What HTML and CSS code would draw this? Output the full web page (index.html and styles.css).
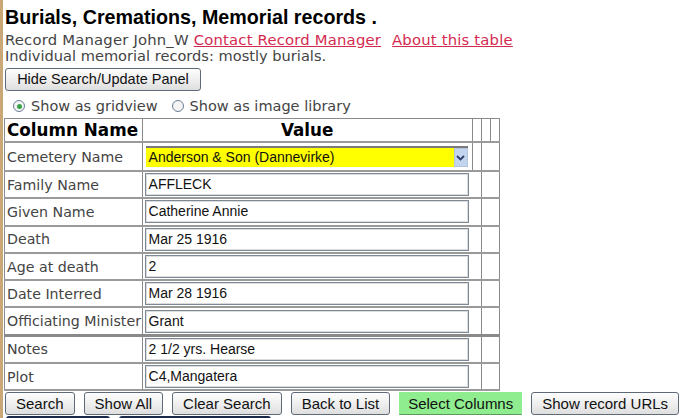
FILE: index.html
```html
<!DOCTYPE html>
<html>
<head>
<meta charset="utf-8">
<link rel="stylesheet" href="styles.css">
</head>
<body>
<div class="page">
  <h1 class="title">Burials, Cremations, Memorial records .</h1>
  <div class="info info-1">Record Manager John_W <a href="#" class="lnk">Contact Record Manager</a> <a href="#" class="lnk lnk-2">About this table</a></div>
  <div class="info">Individual memorial records: mostly burials.</div>
  <button class="btn btn-top">Hide Search/Update Panel</button>
  <div class="radios">
    <span class="radio on"></span><span class="rlabel">Show as gridview</span>
    <span class="radio"></span><span class="rlabel">Show as image library</span>
  </div>
  <table class="grid">
    <tr class="head">
      <th class="c1">Column Name</th>
      <th class="c2">Value</th>
      <th class="cx"></th>
      <th class="cx"></th>
      <th class="cx"></th>
    </tr>
    <tr class="first">
      <td class="lbl">Cemetery Name</td>
      <td class="val"><div class="sel"><span class="sel-text">Anderson &amp; Son (Dannevirke)</span><span class="sel-arrow"><svg width="9" height="6" viewBox="0 0 9 6"><path d="M1 1 L4.5 4.5 L8 1" fill="none" stroke="#2b3d6b" stroke-width="1.8"/></svg></span></div></td>
      <td class="ex"></td>
      <td class="ex" colspan="2"></td>
    </tr>
    <tr>
      <td class="lbl">Family Name</td>
      <td class="val" colspan="2"><div class="inp">AFFLECK</div></td>
      <td class="ex" colspan="2"></td>
    </tr>
    <tr>
      <td class="lbl">Given Name</td>
      <td class="val" colspan="2"><div class="inp">Catherine Annie</div></td>
      <td class="ex" colspan="2"></td>
    </tr>
    <tr>
      <td class="lbl">Death</td>
      <td class="val" colspan="2"><div class="inp">Mar 25 1916</div></td>
      <td class="ex" colspan="2"></td>
    </tr>
    <tr>
      <td class="lbl">Age at death</td>
      <td class="val" colspan="2"><div class="inp">2</div></td>
      <td class="ex" colspan="2"></td>
    </tr>
    <tr>
      <td class="lbl">Date Interred</td>
      <td class="val" colspan="2"><div class="inp">Mar 28 1916</div></td>
      <td class="ex" colspan="2"></td>
    </tr>
    <tr class="sep">
      <td class="lbl">Officiating Minister</td>
      <td class="val" colspan="2"><div class="inp">Grant</div></td>
      <td class="ex" colspan="2"></td>
    </tr>
    <tr>
      <td class="lbl">Notes</td>
      <td class="val" colspan="2"><div class="inp">2 1/2 yrs. Hearse</div></td>
      <td class="ex" colspan="2"></td>
    </tr>
    <tr>
      <td class="lbl">Plot</td>
      <td class="val" colspan="2"><div class="inp">C4,Mangatera</div></td>
      <td class="ex" colspan="2"></td>
    </tr>
  </table>
  <div class="actions">
    <button class="btn">Search</button>
    <button class="btn">Show All</button>
    <button class="btn">Clear Search</button>
    <button class="btn">Back to List</button>
    <button class="btn btn-green">Select Columns</button>
    <button class="btn">Show record URLs</button>
  </div>
  <div class="actions2">
    <button class="btn btn-dark btn-w1"></button>
    <button class="btn btn-dark btn-w2"></button>
  </div>
</div>
</body>
</html>
```
FILE: styles.css
```css
html, body {
  margin: 0;
  padding: 0;
  background: #ffffff;
}
body {
  border-left: 3px solid #c9a777;
  height: 418px;
  box-sizing: border-box;
  overflow: hidden;
}
.page {
  padding-left: 2px;
}
.title {
  margin: 0;
  padding-top: 2px;
  font-family: "Liberation Sans", Arial, sans-serif;
  font-weight: bold;
  font-size: 19.7px;
  line-height: 30px;
  color: #000;
}
.info {
  font-family: "DejaVu Sans", Verdana, sans-serif;
  font-size: 14.6px;
  line-height: 16px;
  color: #444;
  white-space: nowrap;
}
.info-1 {
  font-size: 14.8px;
  letter-spacing: 0.2px;
}
.lnk {
  color: #d42a4f;
  text-decoration: underline;
}
.lnk-2 {
  margin-left: 6px;
}
.btn {
  font-family: "Liberation Sans", Arial, sans-serif;
  font-size: 15px;
  color: #111;
  height: 23px;
  padding: 0 10px;
  border: 1px solid #5f6a78;
  border-radius: 3px;
  background: linear-gradient(#fdfdfd, #ececec 60%, #dedede);
  line-height: 21px;
  white-space: nowrap;
  flex-shrink: 0;
}
.btn-top {
  display: block;
  margin-top: 4px;
  font-size: 14.5px;
  padding: 0 10px;
  width: 196px;
}
.radios {
  display: flex;
  align-items: center;
  height: 27px;
  padding-top: 3px;
  box-sizing: border-box;
  font-family: "DejaVu Sans", Verdana, sans-serif;
  font-size: 14.5px;
  color: #444;
}
.radio {
  width: 10px;
  height: 10px;
  border: 1px solid #6b7f99;
  border-radius: 50%;
  background: #f4f4f4;
  margin-left: 8px;
  margin-right: 6px;
  display: flex;
  align-items: center;
  justify-content: center;
}
.radio.on::after {
  content: "";
  width: 5px;
  height: 5px;
  border-radius: 50%;
  background: #3aa14a;
}
.rlabel {
  margin-right: 6px;
}
.grid {
  margin-left: -1px;
  border-collapse: collapse;
  border: 1px solid #8a8a8a;
  width: 496px;
}
.grid th, .grid td {
  border-left: 1px solid #8a8a8a;
  border-right: 1px solid #8a8a8a;
  border-top: 2px solid #9a9a9a;
  border-bottom: 2px solid #9a9a9a;
  padding: 0;
}
.head th {
  font-family: "DejaVu Sans", Verdana, sans-serif;
  font-weight: bold;
  font-size: 16.8px;
  color: #000;
  height: 22px;
  line-height: 20px;
  border-top: 1px solid #8a8a8a;
}
.c1 {
  width: 134px;
  text-align: left;
  padding-left: 2px !important;
}
.c2 {
  width: 328px;
  text-align: center;
}
.cx {
  width: 8px;
}
.lbl {
  font-family: "DejaVu Sans", Verdana, sans-serif;
  font-size: 14.2px;
  color: #444;
  padding-left: 2px !important;
  height: 25.3px;
  white-space: nowrap;
}
.first .lbl {
  height: 27px;
}
.val {
  padding: 0 0 0 2px !important;
}
.sep td {
  border-bottom: 3px solid #8a8a8a;
}
.inp {
  width: 324px;
  height: 23px;
  box-sizing: border-box;
  border: 1px solid #7d8a96;
  box-shadow: inset 0 0 0 1px #dcdcdc;
  font-family: "Liberation Sans", Arial, sans-serif;
  font-size: 14px;
  line-height: 21px;
  color: #111;
  padding-left: 3px;
}
.sel {
  display: flex;
  align-items: stretch;
  width: 322px;
  height: 21px;
  margin-left: 1px;
  border-top: 2px solid #7a7a7a;
  box-sizing: border-box;
  background: #ffff00;
  font-family: "Liberation Sans", Arial, sans-serif;
  font-size: 14px;
  color: #111;
}
.sel-text {
  flex: 1;
  padding-left: 3px;
  line-height: 18px;
}
.sel-arrow {
  width: 12px;
  background: #c3d4ee;
  border: 1px solid #b3c4dc;
  display: flex;
  align-items: center;
  justify-content: center;
}
.actions {
  display: flex;
  gap: 9px;
  margin-top: 1px;
}
.btn-green {
  background: #8fec8f;
  border-color: #8fec8f #8fec8f #5c9a5c #8fec8f;
  border-radius: 0;
  padding: 0 8px;
}
.actions2 {
  display: flex;
  gap: 9px;
  margin-top: 1px;
  padding-left: 1px;
}
.btn-dark {
  border: 2px solid #1c2a4a;
  background: #e8e8e8;
}
.btn-w1 {
  width: 104px;
}
.btn-w2 {
  width: 152px;
}
```
